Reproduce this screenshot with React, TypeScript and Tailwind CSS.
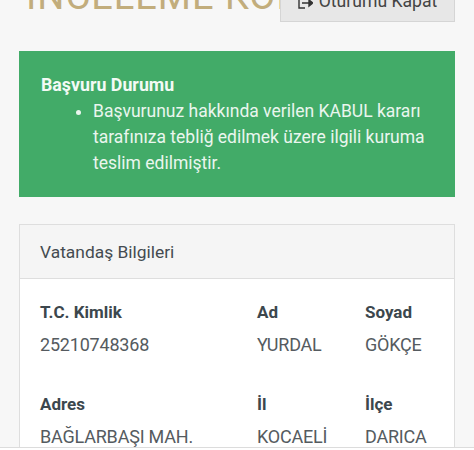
const rows = [
  [
    { label: "T.C. Kimlik", value: "25210748368" },
    { label: "Ad", value: "YURDAL" },
    { label: "Soyad", value: "GÖKÇE" },
  ],
  [
    { label: "Adres", value: "BAĞLARBAŞI MAH." },
    { label: "İl", value: "KOCAELİ" },
    { label: "İlçe", value: "DARICA" },
  ],
]

export default function App() {
  return (
    <div className="h-[450px] w-[474px] overflow-hidden bg-white font-['Roboto',sans-serif]">
      <div className="h-[448px] overflow-hidden border-b border-[#dcdcdc] bg-[#f7f7f7]">
        <header className="-mt-[14px] flex h-[36px] items-end justify-between pl-[26px] pr-[19px]">
          <h1 className="w-[254px] overflow-hidden whitespace-nowrap pb-[7px] text-[38px] leading-none tracking-[1px] text-[#c2ad7c]">
            İNCELEME KOMİSYONU
          </h1>
          <button className="flex h-full w-[175px] shrink-0 items-end justify-center gap-1.5 border border-[#d5d5d5] bg-[#e7e7e7] pb-[10px] text-[17.6px] leading-none text-[#444]">
            <svg width="15" height="12" viewBox="0 0 15 12" fill="none" stroke="#333" strokeWidth="1.4" className="mb-0.5">
              <path d="M6 1H1v10h6" />
              <path d="M4 6h7V3l4 3-4 3V6" fill="#333" />
            </svg>
            Oturumu Kapat
          </button>
        </header>

        <section className="mx-[19px] mt-[29px] h-[146px] bg-[#42ab68] pl-[22px] pr-4 pt-[21px] text-[17.5px] leading-[26px] text-[#eaf6ee]">
          <h2 className="text-[17.8px] font-bold text-[#f3faf5]">Başvuru Durumu</h2>
          <ul className="list-disc pl-[52px]">
            <li>
              Başvurunuz hakkında verilen KABUL kararı tarafınıza tebliğ edilmek üzere ilgili kuruma teslim edilmiştir.
            </li>
          </ul>
        </section>

        <section className="mx-[19px] mt-[27px] border border-[#dedede] bg-white">
          <div className="flex h-[54px] items-center border-b border-[#dedede] bg-[#f5f5f5] px-5 pt-0.5 text-[17.4px] text-[#444b50]">
            Vatandaş Bilgileri
          </div>
          <div className="flex flex-col gap-[33px] px-5 pt-5">
            {rows.map((row) => (
              <div key={row[0].label} className="grid grid-cols-[217px_108px_1fr]">
                {row.map((cell) => (
                  <div key={cell.label} className="whitespace-nowrap">
                    <div className="text-[17px] font-bold leading-[26px] text-[#3c474d]">{cell.label}</div>
                    <div className="mt-[7px] text-[18px] leading-[26px] tracking-[-0.2px] text-[#555b60]">{cell.value}</div>
                  </div>
                ))}
              </div>
            ))}
          </div>
        </section>
      </div>
    </div>
  )
}
